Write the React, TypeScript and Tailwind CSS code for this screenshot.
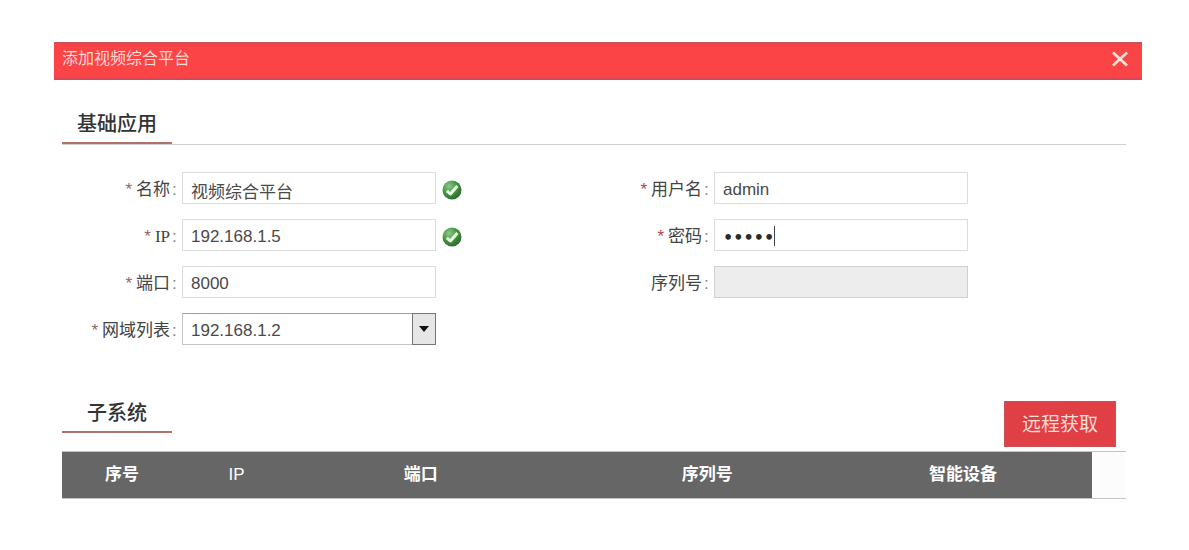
import { useState } from 'react';

const columns = [
  { label: '序号', width: 'w-[12%]' },
  { label: 'IP', width: 'w-[17%]' },
  { label: '端口', width: 'w-[27%]' },
  { label: '序列号', width: 'w-[24%]' },
  { label: '智能设备', width: 'w-[20%]' },
];

const inputClass =
  'block w-full h-8 px-2 pt-1 text-[17px] text-[#4a4a4a] bg-white border border-[#dcdcdc] outline-none';

function CheckIcon() {
  return (
    <svg className="w-5 h-5 mt-1 shrink-0" viewBox="0 0 20 20" aria-hidden="true">
      <defs>
        <radialGradient id="ok" cx="0.35" cy="0.3" r="0.8">
          <stop offset="0" stopColor="#8cc98a" />
          <stop offset="0.5" stopColor="#43953f" />
          <stop offset="1" stopColor="#2a5f2c" />
        </radialGradient>
      </defs>
      <circle cx="10" cy="10" r="9.5" fill="url(#ok)" />
      <path d="M4.8 10.8l3.6 3.2 7-8" fill="none" stroke="#e9ffe4" strokeWidth="3" strokeLinejoin="round" />
    </svg>
  );
}

function Field({
  id,
  label,
  required,
  star = 'text-[#8a6a6a]',
  valid,
  children,
}: {
  id: string;
  label: string;
  required?: boolean;
  star?: string;
  valid?: boolean;
  children: React.ReactNode;
}) {
  return (
    <div className="flex items-center gap-1.5">
      <label
        htmlFor={id}
        className="w-[114px] pt-1 shrink-0 flex items-center justify-end text-[17px] leading-6 text-[#444] whitespace-nowrap"
      >
        {required && <span className={`mr-1 leading-7 ${star}`}>*</span>}
        <span className={label === 'IP' ? 'font-["Liberation_Serif",serif]' : ''}>{label}</span>
        <span className="ml-0.5 w-1 text-[#888]">:</span>
      </label>
      <div className="relative w-[254px]">{children}</div>
      {valid && <CheckIcon />}
    </div>
  );
}

function SectionTitle({ children }: { children: React.ReactNode }) {
  return (
    <h2 className="w-[110px] h-10 pt-0.5 flex items-center justify-center text-xl font-medium text-[#333] border-b-2 border-[#b0706c]">
      {children}
    </h2>
  );
}

export default function App() {
  const [name, setName] = useState('视频综合平台');
  const [ip, setIp] = useState('192.168.1.5');
  const [port, setPort] = useState('8000');
  const [user, setUser] = useState('admin');
  const [password, setPassword] = useState('admin');

  return (
    <div className='min-h-screen bg-white pt-[42px] pb-10 pl-[54px] pr-[47px] font-["Liberation_Sans","Noto_Sans_CJK_SC",sans-serif]'>
      <header className="h-[38px] pl-2 pr-3.5 flex items-center justify-between bg-[#fb4446] border-y-2 border-t-[#c25560] border-b-[#d8465a]">
        <h1 className="pb-1 text-base text-[#ffd9d2]">添加视频综合平台</h1>
        <button type="button" aria-label="关闭" className="pb-1">
          <svg className="w-4 h-4" viewBox="0 0 16 16" fill="none" stroke="#ffe6dc" strokeWidth="2.6">
            <path d="M1 1.5l14 13M15 1.5l-14 13" />
          </svg>
        </button>
      </header>

      <main className="pl-2 pr-4">
        <div className="mt-6 border-b border-[#cfcfcf]">
          <SectionTitle>基础应用</SectionTitle>
        </div>

        <form className="mt-[27px] grid grid-cols-2">
          <div className="flex flex-col gap-[15px]">
            <Field id="name" label="名称" required valid>
              <input id="name" className={inputClass} value={name} onChange={(e) => setName(e.target.value)} />
            </Field>
            <Field id="ip" label="IP" required valid>
              <input id="ip" className={inputClass} value={ip} onChange={(e) => setIp(e.target.value)} />
            </Field>
            <Field id="port" label="端口" required>
              <input id="port" className={inputClass} value={port} onChange={(e) => setPort(e.target.value)} />
            </Field>
            <Field id="domain" label="网域列表" required>
              <select
                id="domain"
                className="block w-full h-8 px-2 pt-1 appearance-none text-[17px] text-[#4a4a4a] bg-white border border-[#c4c4c4] border-t-[#a0a0a0] outline-none"
              >
                <option>192.168.1.2</option>
              </select>
              <span className="absolute right-0 top-0 w-6 h-8 flex items-center justify-center bg-[#e6e6e6] border border-[#777] pointer-events-none">
                <svg className="w-2.5 h-1.5" viewBox="0 0 10 6">
                  <path d="M0 0h10L5 6z" fill="#111" />
                </svg>
              </span>
            </Field>
          </div>

          <div className="flex flex-col gap-[15px]">
            <Field id="user" label="用户名" required star="text-[#b8404c]">
              <input id="user" className={inputClass} value={user} onChange={(e) => setUser(e.target.value)} />
            </Field>
            <Field id="password" label="密码" required star="text-[#b8404c]">
              <input
                id="password"
                type="password"
                className="block w-full h-8 px-2 pt-1 font-['DejaVu_Sans'] text-base font-bold text-[#2b2b2b] bg-white border border-[#dcdcdc] outline-none"
                value={password}
                onChange={(e) => setPassword(e.target.value)}
              />
              <span className="absolute left-[60px] top-[7px] w-px h-5 bg-[#444]" />
            </Field>
            <Field id="serial" label="序列号">
              <input
                id="serial"
                disabled
                className="block w-full h-8 px-2 text-[17px] bg-[#ededed] border border-[#d0d0d0]"
              />
            </Field>
          </div>
        </form>

        <div className="mt-12 mb-1 flex items-start justify-between">
          <SectionTitle>子系统</SectionTitle>
          <button
            type="button"
            className="mt-2 mr-2.5 w-28 h-[46px] pt-0.5 text-[19px] text-[#ffdcd6] bg-[#e03f45] border border-[#c8505a]"
          >
            远程获取
          </button>
        </div>

        <div className="pr-[34px] bg-[#fcfcfc] border-y border-[#c4c4c4]">
          <table className="w-full table-fixed bg-[#666]">
            <thead>
              <tr className="h-[46px]">
                {columns.map((col) => (
                  <th
                    key={col.label}
                    className={`${col.width} pl-[43px] text-left text-[17px] text-white ${col.label === 'IP' ? 'font-normal' : 'font-bold'}`}
                  >
                    {col.label}
                  </th>
                ))}
              </tr>
            </thead>
          </table>
        </div>
      </main>
    </div>
  );
}
